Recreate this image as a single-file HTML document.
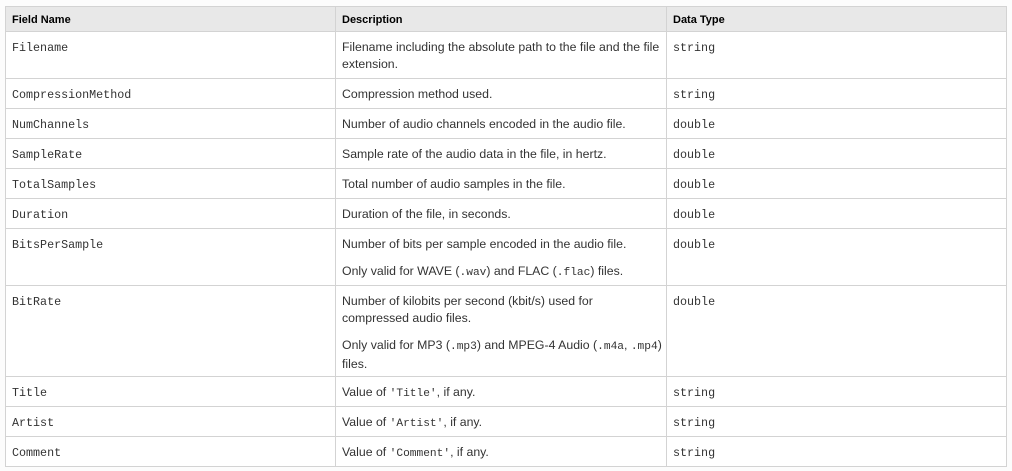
<!DOCTYPE html>
<html><head><style>
body{margin:0;background:#fcfcfc;width:1012px;height:471px;overflow:hidden}
table{position:absolute;left:5px;top:6px;border-collapse:collapse;table-layout:fixed;width:1001px;font:12.3px "Liberation Sans",Arial,sans-serif;color:#333;background:#fff}
td,th{border:1px solid #d3d3d3;vertical-align:top;padding:7px 6px 0 6px;line-height:17px;text-align:left;white-space:nowrap;overflow:hidden}
td.m{padding-top:8px;line-height:16px}
th{background:#e8e8e8;font-weight:bold;color:#000;height:19px;padding-top:5px;font-size:11px}
.m{font-family:"Liberation Mono","Courier New",monospace;font-size:11.7px;color:#333}
code{font-family:"Liberation Mono","Courier New",monospace;font-size:11.2px;color:#333}
p{margin:0 0 10px 0}
p:last-child{margin:0}
</style></head><body>
<table>
<colgroup><col style="width:330px"><col style="width:331px"><col style="width:340px"></colgroup>
<tr><th>Field Name</th><th>Description</th><th>Data Type</th></tr>
<tr style="height:47px"><td class="m">Filename</td><td>Filename including the absolute path to the file and the file<br>extension.</td><td class="m">string</td></tr>
<tr style="height:30px"><td class="m">CompressionMethod</td><td>Compression method used.</td><td class="m">string</td></tr>
<tr style="height:30px"><td class="m">NumChannels</td><td>Number of audio channels encoded in the audio file.</td><td class="m">double</td></tr>
<tr style="height:30px"><td class="m">SampleRate</td><td>Sample rate of the audio data in the file, in hertz.</td><td class="m">double</td></tr>
<tr style="height:30px"><td class="m">TotalSamples</td><td>Total number of audio samples in the file.</td><td class="m">double</td></tr>
<tr style="height:30px"><td class="m">Duration</td><td>Duration of the file, in seconds.</td><td class="m">double</td></tr>
<tr style="height:57px"><td class="m">BitsPerSample</td><td><p>Number of bits per sample encoded in the audio file.</p><p>Only valid for WAVE (<code>.wav</code>) and FLAC (<code>.flac</code>) files.</p></td><td class="m">double</td></tr>
<tr style="height:91px"><td class="m">BitRate</td><td><p>Number of kilobits per second (kbit/s) used for<br>compressed audio files.</p><p>Only valid for MP3 (<code>.mp3</code>) and MPEG-4 Audio (<code>.m4a</code>, <code>.mp4</code>)<br>files.</p></td><td class="m">double</td></tr>
<tr style="height:30px"><td class="m">Title</td><td>Value of <code>'Title'</code>, if any.</td><td class="m">string</td></tr>
<tr style="height:30px"><td class="m">Artist</td><td>Value of <code>'Artist'</code>, if any.</td><td class="m">string</td></tr>
<tr style="height:30px"><td class="m">Comment</td><td>Value of <code>'Comment'</code>, if any.</td><td class="m">string</td></tr>
</table>
</body></html>
